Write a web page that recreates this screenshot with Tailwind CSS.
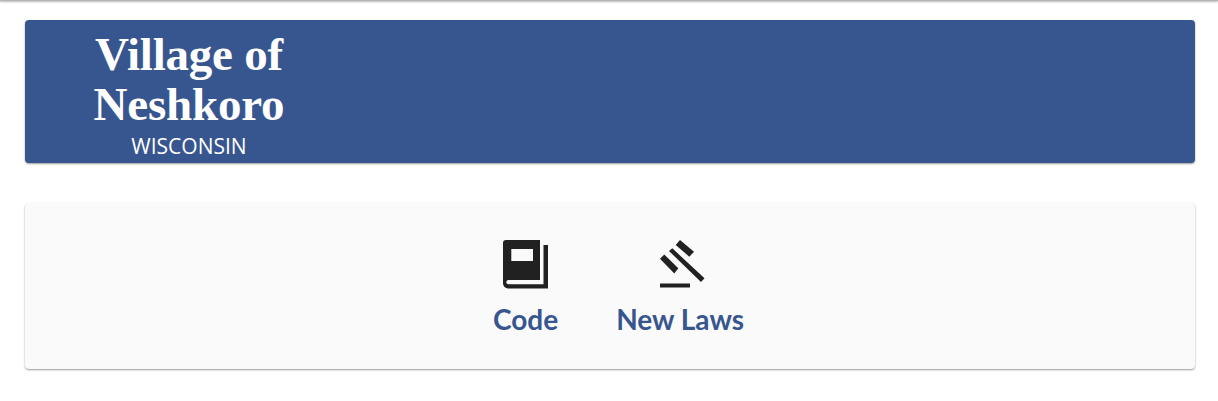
<!DOCTYPE html>
<html lang="en">
<head>
<meta charset="utf-8">
<title>Village of Neshkoro</title>
<script src="https://cdn.jsdelivr.net/npm/@tailwindcss/browser@4"></script>
</head>
<body class="bg-white font-['Open_Sans',sans-serif]">
<div class="h-[401px] overflow-hidden">
  <div class="h-px bg-[#b5b5b5] shadow-[0_1px_2px_rgba(0,0,0,0.4)]"></div>
  <main class="pl-[25px] pr-[23px] pt-[19px]">
    <header class="h-[143px] rounded-[4px] bg-[#37568f] shadow-[0_1px_2px_rgba(0,0,0,0.4)] pl-[64px]">
      <div class="w-[200px] flex flex-col items-center text-white">
        <div class="mt-[9px] text-center font-['Liberation_Serif',serif] font-bold text-[47px] leading-[50px] tracking-[-0.2px]">Village of<br>Neshkoro</div>
        <div class="mt-[3px] text-[21px] leading-[28px] font-['Open_Sans',sans-serif]">WISCONSIN</div>
      </div>
    </header>
    <nav class="mt-[40px] h-[166px] rounded-[4px] bg-[#fafafa] shadow-[0_1px_2px_rgba(0,0,0,0.4)] flex justify-center gap-[58px] pt-[37px] pl-[17px]">
      <a href="#" class="flex flex-col items-center">
        <svg class="w-[46px] h-[50px]" viewBox="0 0 46 50" fill="#212121">
          <path fill-rule="evenodd" d="M3 0H37V40H5.5C4 40 3.3 41 3.3 42.3C3.3 43.5 4.2 44.3 6 44.3H40.5V5H45V48.5H6C2 48.5 0 46 0 43V3C0 1 1 0 3 0ZM8.3 9V21H30V9Z"/>
        </svg>
        <span class="mt-[12px] text-[#37568f] text-[28px] leading-[34px] font-bold font-['Lato',sans-serif]">Code</span>
      </a>
      <a href="#" class="flex flex-col items-center">
        <svg class="w-[46px] h-[50px] ml-[5px]" viewBox="0 0 46 50" fill="#212121">
          <path d="M15.7 5L20 0L34 11.7L29.3 16.7Z"/>
          <path d="M0 18.8L4.3 14.5L18.3 28.3L14.3 33.5Z"/>
          <path d="M9 11L12.3 8.3L44.5 38.3L41 42Z"/>
          <rect x="0" y="43.5" width="30" height="4"/>
        </svg>
        <span class="mt-[12px] text-[#37568f] text-[28px] leading-[34px] font-bold font-['Lato',sans-serif]">New Laws</span>
      </a>
    </nav>
  </main>
</div>
</body>
</html>
